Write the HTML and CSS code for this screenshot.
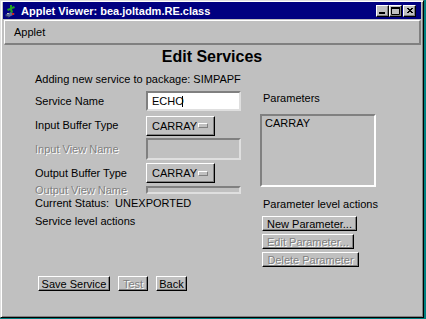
FILE: index.html
```html
<!DOCTYPE html>
<html lang="en">
<head>
    <meta charset="UTF-8">
    <meta name="viewport" content="width=device-width, initial-scale=1.0">
    <title>Applet Viewer: bea.joltadm.RE.class</title>
    <link rel="stylesheet" href="styles.css">
</head>
<body>
    <div class="window">
        <div class="titlebar">
            <svg class="app-icon" width="14" height="14" viewBox="0 0 14 14">
                <path d="M1 11 L7 8 L11 10 L5 13 Z" fill="#5a6a9a"/>
                <path d="M1 11 L5 13 L5 14 L1 12 Z" fill="#2a3060"/>
                <path d="M6 1 L8 1 L8 3 L10 2 L11 4 L8 5 L9 8 L7 9 L6 6 L4 7 L3 5 L6 4 Z" fill="#20a020"/>
                <rect x="8" y="9" width="2" height="2" fill="#d02020"/>
                <rect x="3" y="9" width="2" height="1" fill="#c0c0c0"/>
            </svg>
            <span class="title">Applet Viewer: bea.joltadm.RE.class</span>
            <div class="controls">
                <div class="ctl">
                    <svg width="11" height="10" viewBox="0 0 11 10"><rect x="2" y="6" width="6" height="2" fill="#000"/></svg>
                </div>
                <div class="ctl">
                    <svg width="11" height="10" viewBox="0 0 11 10"><path d="M1.5 1.5 H9.5 V8.5 H1.5 Z" fill="none" stroke="#000"/><rect x="1" y="1" width="9" height="2" fill="#000"/></svg>
                </div>
                <div class="ctl close">
                    <svg width="11" height="10" viewBox="0 0 11 10"><path d="M3 2 L8 7 M8 2 L3 7 M4 2 L9 7 M9 2 L4 7" stroke="#000" stroke-width="1"/></svg>
                </div>
            </div>
        </div>

        <div class="menubar">
            <span>Applet</span>
        </div>

        <div class="content">
            <h1>Edit Services</h1>
            <p class="package">Adding new service to package: SIMPAPF</p>

            <div class="columns">
                <div class="left">
                    <div class="form-grid">
                        <label>Service Name</label>
                        <div class="field">ECHO<span class="caret"></span></div>

                        <label>Input Buffer Type</label>
                        <div class="choice"><span>CARRAY</span><span class="knob"></span></div>

                        <label class="dim">Input View Name</label>
                        <div class="field off tall"></div>

                        <label>Output Buffer Type</label>
                        <div class="choice"><span>CARRAY</span><span class="knob"></span></div>

                        <label class="dim short">Output View Name</label>
                        <div class="field off squeezed"></div>
                    </div>
                    <p class="status">Current Status: &nbsp;UNEXPORTED</p>
                    <p class="section">Service level actions</p>
                </div>

                <div class="right">
                    <p class="param-label">Parameters</p>
                    <div class="listbox">
                        <div class="item">CARRAY</div>
                    </div>
                    <p class="param-actions">Parameter level actions</p>
                    <button class="btn new-param">New Parameter...</button>
                    <button class="btn edit-param dim">Edit Parameter...</button>
                    <button class="btn delete-param dim">Delete Parameter</button>
                </div>
            </div>

            <div class="bottom-buttons">
                <button class="btn save">Save Service</button>
                <button class="btn test dim">Test</button>
                <button class="btn back">Back</button>
            </div>
        </div>
    </div>
</body>
</html>
```

FILE: styles.css
```css
* {
    box-sizing: border-box;
}
body {
    margin: 0;
    background-color: #008080;
    font-family: "Liberation Sans", Arial, sans-serif;
    font-size: 11px;
    color: #000;
}
.window {
    width: 424px;
    height: 318px;
    background: #c0c0c0;
    border: 1px solid;
    border-color: #dfdfdf #000 #000 #dfdfdf;
    box-shadow: inset 1px 1px #fff, inset -1px -1px #808080;
    padding: 1px 2px 2px 2px;
    display: flex;
    flex-direction: column;
}
.titlebar {
    height: 17px;
    background: #000080;
    color: #fff;
    display: flex;
    align-items: center;
    padding: 0 5px 0 1px;
}
.app-icon {
    flex: none;
}
.title {
    flex: 1;
    margin-left: 3px;
    font-weight: bold;
    font-size: 11px;
    white-space: nowrap;
}
.controls {
    display: flex;
}
.ctl {
    width: 13px;
    height: 12px;
    background: #c0c0c0;
    border: 1px solid;
    border-color: #fff #000 #000 #fff;
    box-shadow: inset -1px -1px #808080;
    display: flex;
}
.ctl svg {
    display: block;
}
.ctl.close {
    margin-left: 1px;
}
.menubar {
    margin: 1px 0 0 1px;
    height: 25px;
    border-top: 1px solid #fff;
    border-left: 1px solid #fff;
    border-right: 2px solid #808080;
    border-bottom: 2px solid #808080;
    display: flex;
    align-items: center;
    padding-left: 9px;
}
.content {
    flex: 1;
}
h1 {
    margin: 2px 0 0;
    font-size: 16px;
    line-height: 19px;
    text-align: center;
}
p {
    margin: 0;
    line-height: 13px;
}
.package {
    margin-top: 7px;
    padding-left: 32px;
    white-space: nowrap;
}
.columns {
    display: flex;
    margin-top: 3px;
    padding-left: 32px;
}
.left {
    width: 225px;
}
.right {
    width: 120px;
}
.form-grid {
    display: grid;
    grid-template-columns: 111px 95px;
    grid-template-rows: 24px 25px 22px 26px 8px;
    align-items: center;
}
.form-grid label {
    white-space: nowrap;
    line-height: 13px;
}
.form-grid label.short {
    align-self: start;
    line-height: 8px;
}
.field {
    height: 20px;
    border: 2px solid;
    border-color: #808080 #dfdfdf #dfdfdf #808080;
    background: #fff;
    padding-left: 4px;
    display: flex;
    align-items: center;
}
.field.off {
    background: #c0c0c0;
}
.field.tall {
    height: 22px;
}
.field.squeezed {
    height: 8px;
    align-self: start;
}
.caret {
    display: inline-block;
    width: 1px;
    height: 11px;
    margin-left: -2px;
    background: #000;
}
.choice {
    width: 69px;
    height: 20px;
    border: 1px solid;
    border-color: #fff #000 #000 #fff;
    box-shadow: inset -1px -1px #808080;
    display: flex;
    align-items: center;
    padding-left: 5px;
}
.knob {
    margin-left: auto;
    margin-right: 6px;
    width: 10px;
    height: 5px;
    border: 1px solid;
    border-color: #fff #808080 #808080 #fff;
}
.dim {
    color: #808080;
    text-shadow: 1px 1px 0 #fff;
}
.status {
    margin-top: 3px;
    white-space: nowrap;
}
.section {
    margin-top: 5px;
}
.param-label {
    margin-top: 3px;
    padding-left: 3px;
}
.listbox {
    margin-top: 9px;
    width: 116px;
    height: 73px;
    border: 2px solid;
    border-color: #808080 #fff #fff #808080;
    padding: 1px 3px;
}
.item {
    line-height: 13px;
}
.param-actions {
    margin-top: 11px;
    padding-left: 3px;
    white-space: nowrap;
}
.btn {
    display: block;
    height: 15px;
    padding: 0;
    background: #c0c0c0;
    border: 1px solid;
    border-color: #fff #000 #000 #fff;
    box-shadow: inset -1px -1px #808080;
    font-family: "Liberation Sans", Arial, sans-serif;
    font-size: 11px;
    line-height: 12px;
    text-align: center;
    white-space: nowrap;
}
.btn:not(.dim) {
    color: #000;
}
.new-param {
    margin: 5px 0 0 2px;
    width: 95px;
}
.edit-param {
    margin: 3px 0 0 2px;
    width: 92px;
}
.delete-param {
    margin: 3px 0 0 2px;
    width: 97px;
}
.bottom-buttons {
    display: flex;
    gap: 8px;
    margin-top: 9px;
    padding-left: 35px;
}
.save {
    width: 72px;
}
.test {
    width: 30px;
}
.back {
    width: 31px;
}
```
